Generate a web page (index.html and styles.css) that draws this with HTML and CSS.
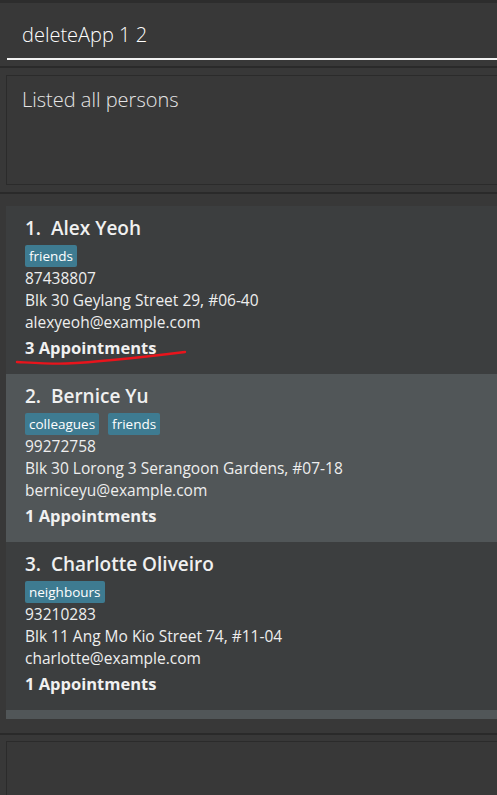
FILE: index.html
```html
<!DOCTYPE html>
<html>
<head>
<meta charset="utf-8">
<link rel="stylesheet" href="styles.css">
</head>
<body>
<div class="app">
  <div class="topband"></div>
  <section class="command">
    <div class="command-field">deleteApp 1 2</div>
  </section>
  <div class="divider"></div>
  <section class="result">
    <div class="result-box">Listed all persons</div>
  </section>
  <div class="divider"></div>
  <section class="list-panel">
    <div class="list-view">
      <div class="cell cell-even">
        <div class="name">1.&nbsp;&nbsp;Alex Yeoh</div>
        <div class="tags"><span class="tag">friends</span></div>
        <div class="small">87438807</div>
        <div class="small">Blk 30 Geylang Street 29, #06-40</div>
        <div class="small">alexyeoh@example.com</div>
        <div class="appts">3 Appointments</div>
        <svg class="scribble" width="200" height="30" viewBox="0 0 200 30">
          <path d="M11 17 C 30 18, 45 19, 60 18.5 C 95 17, 130 13, 179 7" fill="none" stroke="#e8141c" stroke-width="2.4" stroke-linecap="round"/>
        </svg>
      </div>
      <div class="cell cell-odd">
        <div class="name">2.&nbsp;&nbsp;Bernice Yu</div>
        <div class="tags"><span class="tag">colleagues</span><span class="tag">friends</span></div>
        <div class="small">99272758</div>
        <div class="small">Blk 30 Lorong 3 Serangoon Gardens, #07-18</div>
        <div class="small">berniceyu@example.com</div>
        <div class="appts">1 Appointments</div>
      </div>
      <div class="cell cell-even">
        <div class="name">3.&nbsp;&nbsp;Charlotte Oliveiro</div>
        <div class="tags"><span class="tag">neighbours</span></div>
        <div class="small">93210283</div>
        <div class="small">Blk 11 Ang Mo Kio Street 74, #11-04</div>
        <div class="small">charlotte@example.com</div>
        <div class="appts">1 Appointments</div>
      </div>
      <div class="cell cell-odd"></div>
    </div>
  </section>
  <div class="divider"></div>
  <section class="status">
    <div class="status-box"></div>
  </section>
</div>
</body>
</html>
```

FILE: styles.css
```css
* { box-sizing: border-box; }
html, body {
  margin: 0;
  padding: 0;
  background: #383838;
  overflow: hidden;
}
body {
  width: 497px;
  height: 795px;
  font-family: "Open Sans", "Noto Sans", sans-serif;
  color: #ffffff;
}
.app {
  display: flex;
  flex-direction: column;
  height: 795px;
}
.topband {
  height: 3px;
  background: #2d2d2d;
}
.divider {
  height: 2px;
  background: #2a2a2a;
}
.command {
  height: 63px;
  padding: 0 0 0 7px;
}
.command-field {
  height: 57px;
  border-bottom: 2px solid #f2f2f2;
  padding: 18px 0 0 15px;
  font-size: 20px;
  font-weight: 300;
  color: #ffffff;
  line-height: 28px;
}
.result {
  height: 124px;
  padding: 7px 0 0 6px;
}
.result-box {
  height: 110px;
  border: 1px solid #2b2b2b;
  border-right: none;
  padding: 10px 0 0 15px;
  font-size: 20px;
  font-weight: 300;
  line-height: 28px;
  color: #e6e6e6;
}
.list-panel {
  height: 539px;
  padding: 12px 0 0 6px;
}
.list-view {
  height: 513px;
  overflow: hidden;
}
.cell {
  position: relative;
  height: 168px;
  padding: 10px 0 0 19px;
}
.cell-even { background: #3c3e3f; }
.cell-odd { background: #515658; }
.name {
  font-size: 19px;
  font-weight: 600;
  line-height: 24px;
  color: #f0f0f0;
}
.tags {
  display: flex;
  gap: 9px;
  margin-top: 5px;
  height: 22px;
}
.tag {
  background: #3e7b91;
  border-radius: 2px;
  padding: 0 4px;
  font-size: 13.5px;
  line-height: 22px;
  color: #ffffff;
}
.small {
  font-size: 15.5px;
  line-height: 22px;
  color: #eeeeee;
}
.appts {
  margin-top: 3px;
  font-size: 16.5px;
  font-weight: 700;
  line-height: 24px;
  color: #f0f0f0;
}
.scribble {
  position: absolute;
  left: 0;
  top: 139px;
}
.status {
  flex: 1;
  padding: 6px 0 0 6px;
}
.status-box {
  height: 100%;
  border: 1px solid #2b2b2b;
  border-right: none;
  border-bottom: none;
}
```
